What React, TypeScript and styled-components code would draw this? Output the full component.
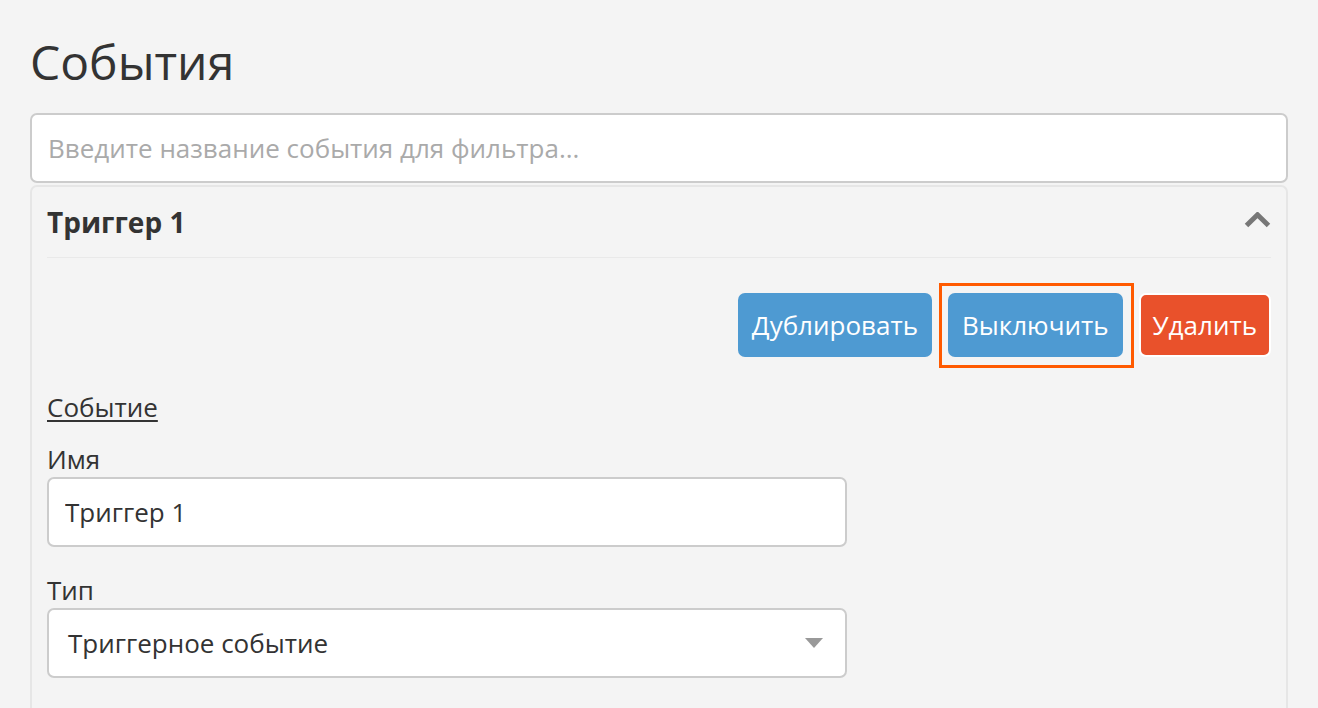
import React from "react";
import styled, { createGlobalStyle } from "styled-components";

const GlobalStyle = createGlobalStyle`
  html, body {
    margin: 0;
    padding: 0;
    background: #f4f4f4;
    overflow: hidden;
  }
  body {
    font-family: "Open Sans", "Liberation Sans", sans-serif;
    color: #333;
  }
  * { box-sizing: border-box; }
`;

const Page = styled.div`
  padding: 34px 30px 0 30px;
  height: 708px;
  display: flex;
  flex-direction: column;
`;

const Title = styled.h1`
  margin: 0 0 23px 0;
  font-size: 48px;
  line-height: 56px;
  font-weight: 400;
  color: #333;
`;

const SearchInput = styled.input`
  display: block;
  width: 100%;
  height: 70px;
  border: 2px solid #cccccc;
  border-radius: 7px;
  background: #fff;
  padding: 0 16px;
  font-family: inherit;
  font-size: 26px;
  color: #333;
  outline: none;
  &::placeholder {
    color: #aaa;
  }
`;

const Card = styled.section`
  margin-top: 2px;
  flex: 1;
  border: 2px solid #e6e6e6;
  border-bottom: none;
  border-radius: 7px 7px 0 0;
  padding: 0 15px;
  display: flex;
  flex-direction: column;
`;

const CardHeader = styled.div`
  height: 71px;
  display: flex;
  align-items: center;
  justify-content: space-between;
  border-bottom: 1px solid #e9e9e9;
`;

const CardTitle = styled.h2`
  margin: 0;
  font-size: 28px;
  line-height: 36px;
  font-weight: 700;
  color: #333;
`;

const Chevron = styled.svg`
  width: 27px;
  height: 16px;
  margin-top: -5px;
`;

const Actions = styled.div`
  display: flex;
  justify-content: flex-end;
  align-items: center;
  gap: 16px;
  margin-top: 35px;
`;

const Button = styled.button<{ $tone: "blue" | "red"; $highlight?: boolean }>`
  position: relative;
  height: 64px;
  padding: 0 ${(p) => (p.$tone === "red" ? 12 : 14)}px;
  border: ${(p) => (p.$tone === "red" ? "2px solid #ffffff" : "none")};
  border-radius: 7px;
  background: ${(p) => (p.$tone === "red" ? "#e9512b" : "#4e9ad2")};
  color: #fff;
  font-family: inherit;
  font-size: 26px;
  line-height: 1;
  cursor: pointer;
  outline: none;
  &::after {
    content: "";
    display: ${(p) => (p.$highlight ? "block" : "none")};
    position: absolute;
    left: -9px;
    right: -11px;
    top: -10px;
    bottom: -11px;
    border: 3px solid #ff5a00;
    pointer-events: none;
  }
`;

const SectionLink = styled.a`
  align-self: flex-start;
  margin-top: 33px;
  font-size: 26px;
  line-height: 34px;
  color: #333;
  text-decoration: underline;
  text-underline-offset: 3px;
  text-decoration-thickness: 2px;
`;

const Field = styled.div<{ $gap: number }>`
  display: flex;
  flex-direction: column;
  margin-top: ${(p) => p.$gap}px;
`;

const Label = styled.label`
  font-size: 26px;
  line-height: 34px;
  color: #333;
  margin-bottom: 1px;
`;

const TextInput = styled.input`
  width: 800px;
  height: 70px;
  border: 2px solid #cccccc;
  border-radius: 7px;
  background: #fff;
  padding: 0 16px;
  font-family: inherit;
  font-size: 26px;
  color: #333;
  outline: none;
`;

const SelectBox = styled.div`
  width: 800px;
  height: 70px;
  border: 2px solid #cccccc;
  border-radius: 7px;
  background: #fff;
  padding: 0 19px;
  display: flex;
  align-items: center;
  justify-content: space-between;
  font-size: 26px;
  color: #333;
`;

const Caret = styled.span`
  width: 0;
  height: 0;
  border-left: 9px solid transparent;
  border-right: 9px solid transparent;
  border-top: 10px solid #999;
  margin-right: 3px;
`;

export default function App() {
  return (
    <>
      <GlobalStyle />
      <Page>
        <Title>События</Title>
        <SearchInput placeholder="Введите название события для фильтра..." />
        <Card>
          <CardHeader>
            <CardTitle>Триггер 1</CardTitle>
            <Chevron viewBox="0 0 27 16" aria-hidden>
              <polyline
                points="2.5,13.5 13.5,2.8 24.5,13.5"
                fill="none"
                stroke="#777"
                strokeWidth="5"
                strokeLinejoin="miter"
              />
            </Chevron>
          </CardHeader>
          <Actions>
            <Button $tone="blue">Дублировать</Button>
            <Button $tone="blue" $highlight>
              Выключить
            </Button>
            <Button $tone="red">Удалить</Button>
          </Actions>
          <SectionLink href="#">Событие</SectionLink>
          <Field $gap={18}>
            <Label>Имя</Label>
            <TextInput defaultValue="Триггер 1" />
          </Field>
          <Field $gap={26}>
            <Label>Тип</Label>
            <SelectBox>
              <span>Триггерное событие</span>
              <Caret />
            </SelectBox>
          </Field>
        </Card>
      </Page>
    </>
  );
}
